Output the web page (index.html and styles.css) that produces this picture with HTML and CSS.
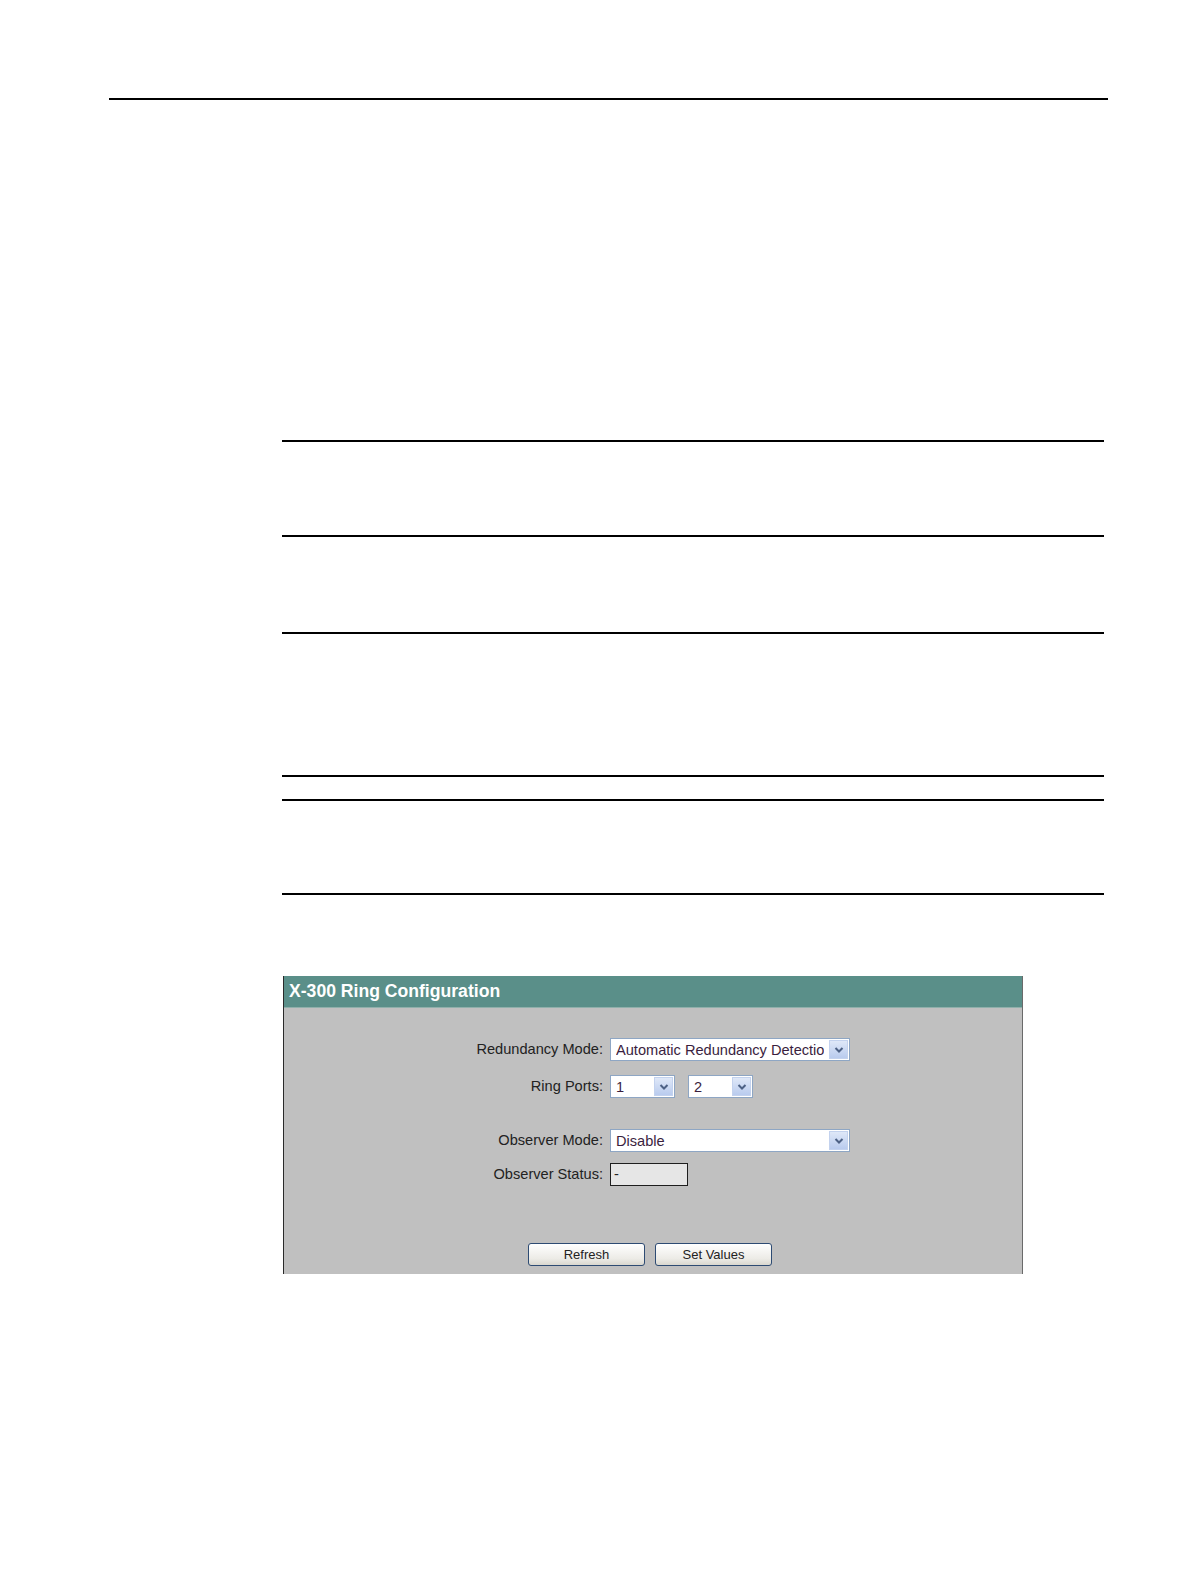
FILE: index.html
```html
<!DOCTYPE html>
<html>
<head>
<meta charset="utf-8">
<link rel="stylesheet" href="styles.css">
</head>
<body>
<div class="page">
  <div class="rule-top"></div>
  <div class="doc">
    <div class="rule r1"></div>
    <div class="rule r2"></div>
    <div class="rule r3"></div>
    <div class="rule r4"></div>
    <div class="rule r5"></div>
    <div class="rule r6"></div>
  </div>
  <div class="panel">
    <div class="panel-head">X-300 Ring Configuration</div>
    <div class="panel-body">
      <div class="form">
        <div class="label">Redundancy Mode:</div>
        <div class="ctrl">
          <div class="select wide"><span class="val">Automatic Redundancy Detectio</span><span class="arrow"><svg viewBox="0 0 10 10" width="10" height="10"><path d="M1.5 3 L5 6.5 L8.5 3" fill="none" stroke="#4d6185" stroke-width="2"/></svg></span></div>
        </div>
        <div class="label">Ring Ports:</div>
        <div class="ctrl ports">
          <div class="select small"><span class="val">1</span><span class="arrow"><svg viewBox="0 0 10 10" width="10" height="10"><path d="M1.5 3 L5 6.5 L8.5 3" fill="none" stroke="#4d6185" stroke-width="2"/></svg></span></div>
          <div class="select small"><span class="val">2</span><span class="arrow"><svg viewBox="0 0 10 10" width="10" height="10"><path d="M1.5 3 L5 6.5 L8.5 3" fill="none" stroke="#4d6185" stroke-width="2"/></svg></span></div>
        </div>
        <div class="label row3">Observer Mode:</div>
        <div class="ctrl row3">
          <div class="select wide"><span class="val">Disable</span><span class="arrow"><svg viewBox="0 0 10 10" width="10" height="10"><path d="M1.5 3 L5 6.5 L8.5 3" fill="none" stroke="#4d6185" stroke-width="2"/></svg></span></div>
        </div>
        <div class="label row4">Observer Status:</div>
        <div class="ctrl row4">
          <div class="status">-</div>
        </div>
      </div>
      <div class="buttons">
        <div class="btn">Refresh</div>
        <div class="btn">Set Values</div>
      </div>
    </div>
  </div>
</div>
</body>
</html>
```

FILE: styles.css
```css
html, body {
  margin: 0;
  padding: 0;
  background: #ffffff;
}
body {
  font-family: "Liberation Sans", Arial, sans-serif;
  width: 1191px;
  height: 1587px;
}
.page {
  padding-top: 98px;
}
.rule-top {
  margin-left: 109px;
  width: 999px;
  border-top: 2px solid #000;
}
.doc {
  margin-left: 282px;
  width: 822px;
}
.rule {
  border-top: 2px solid #000;
}
.r1 { margin-top: 340px; }
.r2 { margin-top: 93px; }
.r3 { margin-top: 95px; }
.r4 { margin-top: 141px; }
.r5 { margin-top: 22px; }
.r6 { margin-top: 92px; }

.panel {
  margin-top: 81px;
  margin-left: 283px;
  width: 738px;
  border-left: 1px solid #2a2a2a;
  border-right: 1px solid #6a6a6a;
  background: #c0c0c0;
}
.panel-head {
  height: 31px;
  background: #5a8f89;
  color: #ffffff;
  font-weight: bold;
  font-size: 17.6px;
  line-height: 31px;
  padding-left: 5px;
  border-bottom: 1px solid #8fb0ab;
}
.panel-body {
  padding-top: 30px;
  padding-bottom: 8px;
}
.form {
  display: grid;
  grid-template-columns: 319px auto;
  column-gap: 7px;
  row-gap: 15px;
}
.label {
  text-align: right;
  font-size: 14.6px;
  line-height: 22px;
  height: 22px;
  color: #222;
}
.ctrl {
  display: flex;
  height: 22px;
}
.row3 { margin-top: 17px; }
.row4 { margin-top: -3px; }
.ports { gap: 13px; }
.select {
  box-sizing: border-box;
  height: 23px;
  background: #fff;
  border: 1px solid #8ea6c4;
  display: flex;
  align-items: center;
  justify-content: space-between;
  padding-left: 5px;
  padding-right: 1px;
  font-size: 14.6px;
  color: #3a1e3e;
}
.select.wide { width: 240px; }
.select.small { width: 65px; }
.val {
  white-space: nowrap;
  overflow: hidden;
}
.arrow {
  box-sizing: border-box;
  width: 19px;
  height: 19px;
  flex: none;
  background: linear-gradient(#dfe8f8, #b9cbee);
  border: 1px solid #c3d2ee;
  display: flex;
  align-items: center;
  justify-content: center;
}
.status {
  box-sizing: border-box;
  width: 78px;
  height: 23px;
  background: #e6e6e6;
  border: 1px solid #1e1e1e;
  font-size: 14.6px;
  line-height: 21px;
  padding-left: 3px;
  color: #222;
}
.buttons {
  display: flex;
  gap: 10px;
  margin-top: 58px;
  margin-left: 244px;
}
.btn {
  box-sizing: border-box;
  width: 117px;
  height: 23px;
  border: 1px solid #2d4b73;
  border-radius: 3px;
  background: linear-gradient(#ffffff, #ecebe6 70%, #d9d7cf);
  font-size: 13px;
  line-height: 21px;
  text-align: center;
  color: #222;
}
```
